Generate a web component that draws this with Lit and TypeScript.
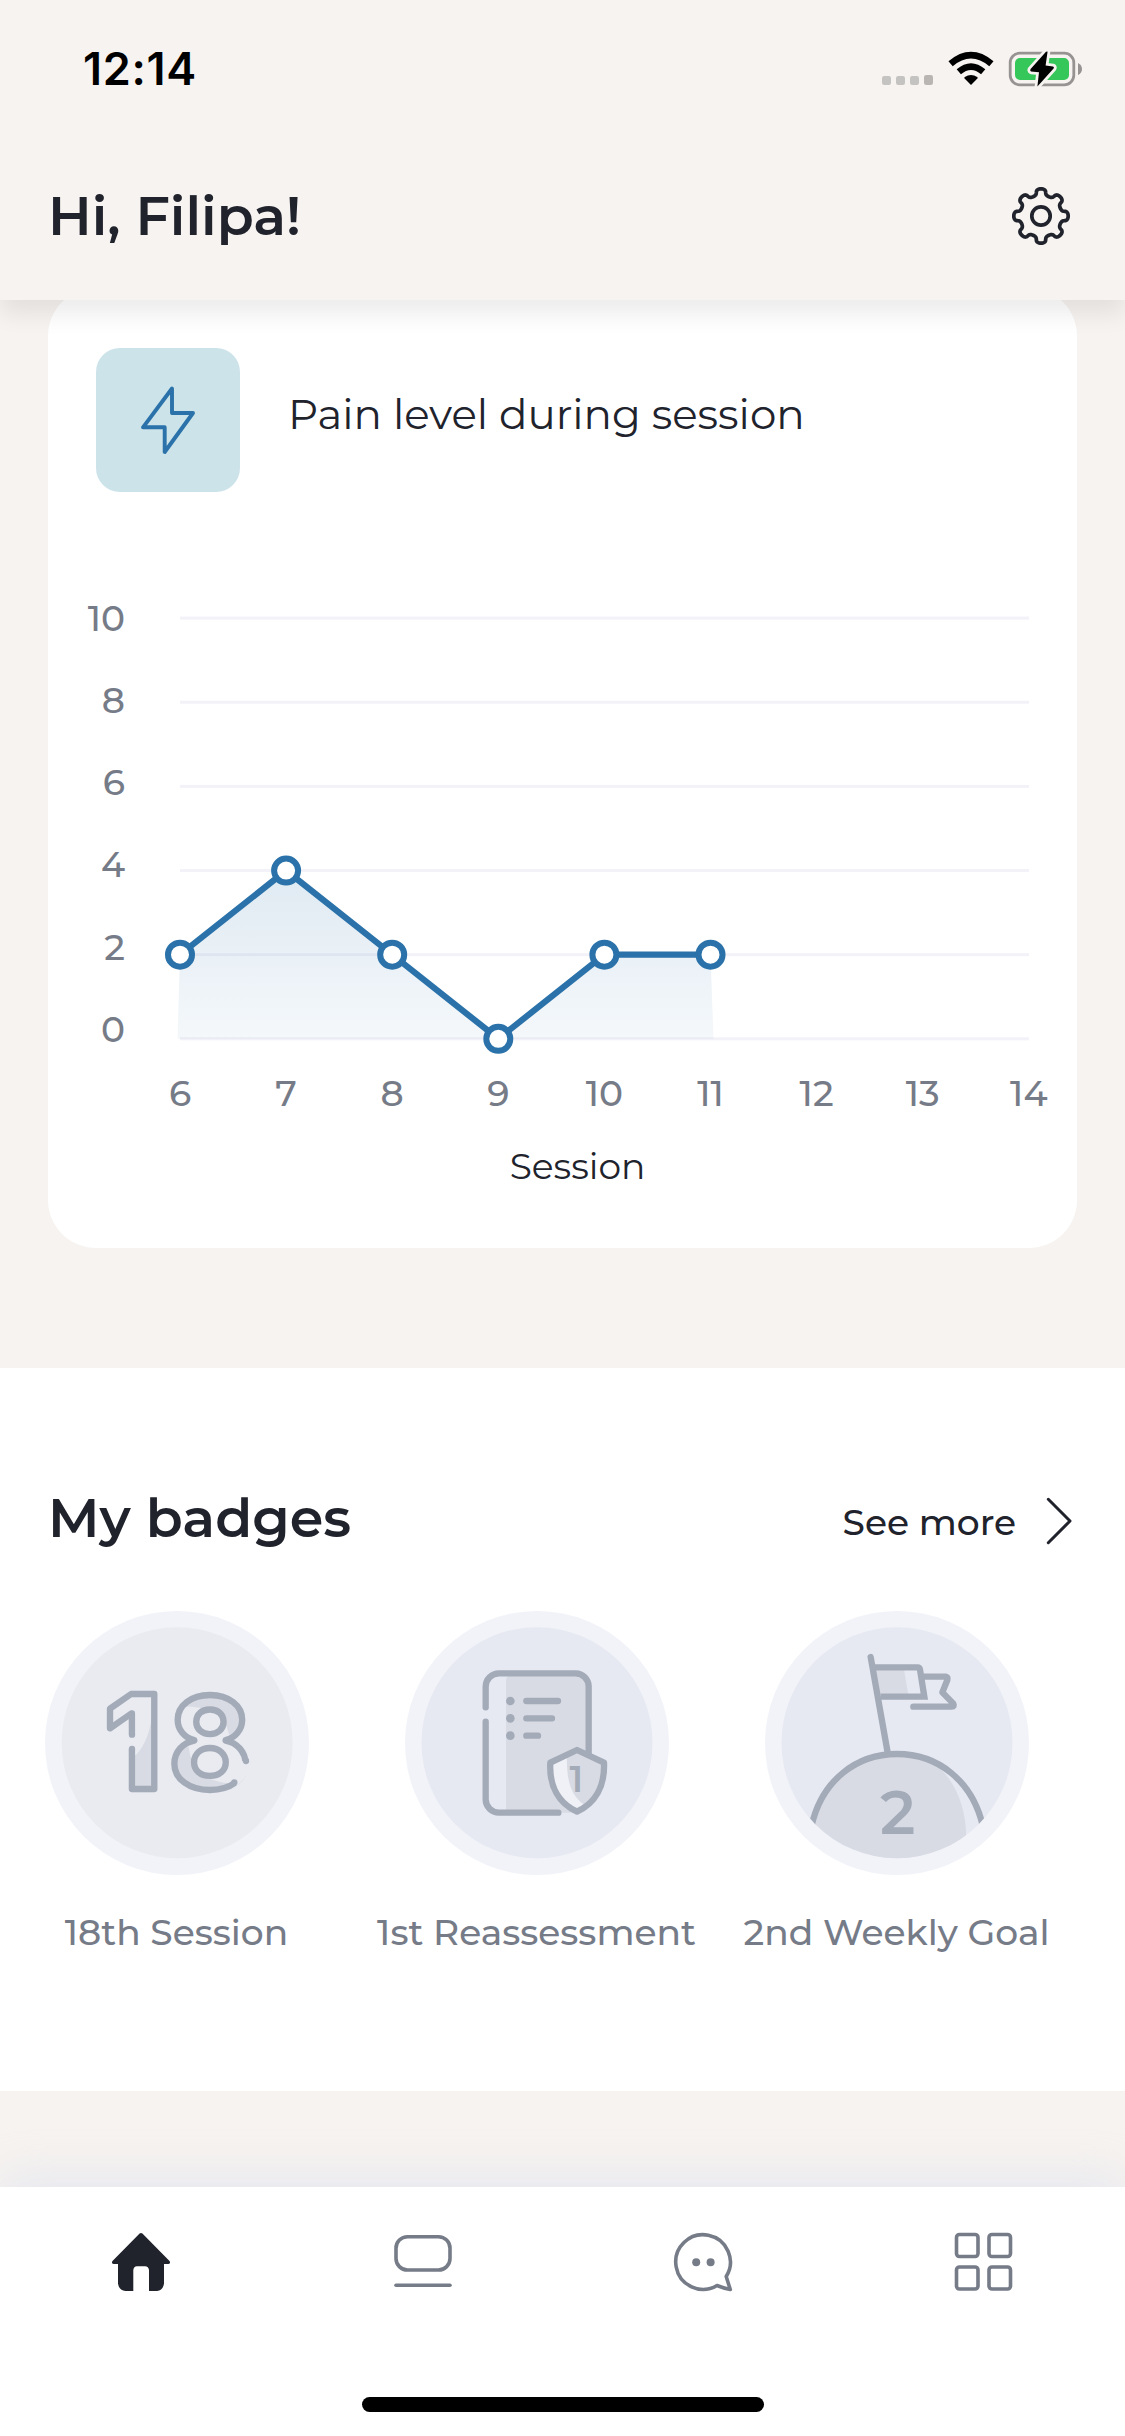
import { LitElement, html, svg, css } from "lit";
import { customElement } from "lit/decorators.js";

const INK = "#20222c";
const BLUE = "#2a72a9";

/** Outline of the eight-lobed settings wheel, centred on 30,30. */
function gearPath(): string {
  const pts: string[] = [];
  const steps = 320;
  for (let i = 0; i < steps; i++) {
    const t = (i / steps) * Math.PI * 2;
    const r = 24 + 3.2 * Math.cos(8 * t);
    const a = t + 0.045 * Math.sin(16 * t);
    pts.push(`${(30 + r * Math.cos(a)).toFixed(2)} ${(30 + r * Math.sin(a)).toFixed(2)}`);
  }
  return `M${pts.join("L")}Z`;
}

@customElement("status-bar")
class StatusBar extends LitElement {
  static styles = css`
    :host {
      display: flex;
      justify-content: space-between;
      height: 132px;
      box-sizing: border-box;
      padding: 42px 40px 0 83px;
    }
    .time {
      font-family: Inter, sans-serif;
      font-size: 45px;
      line-height: 54px;
      font-weight: 600;
      letter-spacing: 0.7px;
      color: #000;
    }
    .icons {
      width: 206px;
      height: 40px;
      margin-top: 8px;
    }
  `;
  render() {
    return html`
      <div class="time">12:14</div>
      <svg class="icons" viewBox="879 50 206 40">
        <g fill="#c5c3c1">
          <rect x="882" y="76" width="9" height="9" rx="2.2" />
          <rect x="896" y="76" width="9" height="9" rx="2.2" />
          <rect x="910" y="76" width="9" height="9" rx="2.2" />
          <rect x="924" y="75" width="9" height="10" rx="2.2" fill="#b8b5b3" />
        </g>
        <path d="M971 85 L964.6 78.6 Q963.8 77.8 964.8 77.1 Q971 73 977.2 77.1 Q978.2 77.8 977.4 78.6 Z" />
        <path d="M958.8 71.8 Q971 61.5 983.2 71.8" fill="none" stroke="#000" stroke-width="6.6" />
        <path d="M950.6 63.8 Q971 46.6 991.4 63.8" fill="none" stroke="#000" stroke-width="6.6" />
        <rect x="1010.2" y="53.2" width="63.6" height="31.6" rx="9.5" fill="none" stroke="#969392" stroke-width="2.8" />
        <path d="M1078 63 Q1082 65 1082 69 Q1082 73 1078 75 Z" fill="#969392" />
        <rect x="1015" y="58" width="54" height="22" rx="5" fill="#35c759" />
        <path
          d="M1047.6 51.4 L1045.6 65.6 L1053 66.4 Q1054.6 67 1053.6 68.6 L1037.4 86.6 L1039 72.2 L1031 71.4 Q1029.6 70.6 1030.6 69 L1046 51.8 Z"
          stroke="#f7f3f0"
          stroke-width="5.5"
          stroke-linejoin="round"
          paint-order="stroke"
          fill="#000"
        />
      </svg>
    `;
  }
}

@customElement("pain-chart")
class PainChart extends LitElement {
  static styles = css`
    :host {
      display: block;
    }
    .plot {
      display: block;
      width: 1029px;
      height: 648px;
    }
    .tick {
      font-size: 36px;
      font-weight: 500;
      fill: #767b88;
    }
  `;
  private values = [2, 4, 2, 0, 2, 2];
  private sessions = [6, 7, 8, 9, 10, 11, 12, 13, 14];
  private x(i: number) {
    return 180 + i * 106.1;
  }
  private y(v: number) {
    return 1038.8 - v * 42.07;
  }
  render() {
    const pts = this.values.map((v, i) => `${this.x(i)},${this.y(v)}`).join(" ");
    return html`
      <svg class="plot" viewBox="48 492 1029 648">
        <defs>
          <linearGradient id="area" gradientUnits="userSpaceOnUse" x1="0" y1="870" x2="0" y2="1039">
            <stop offset="0" stop-color=${BLUE} stop-opacity="0.15" />
            <stop offset="1" stop-color=${BLUE} stop-opacity="0.05" />
          </linearGradient>
        </defs>
        ${[0, 2, 4, 6, 8, 10].map(
          (v) => svg`
            <rect x="180" y=${this.y(v) - 1.5} width="849" height="3" fill="#f2f2f8" />
            <text class="tick" x="125" y=${1041.8 - v * 41.1} text-anchor="end">${v}</text>`
        )}
        <polygon points="177.5,1039 ${pts} 713.5,1039" fill="url(#area)" />
        <polyline points=${pts} fill="none" stroke=${BLUE} stroke-width="6.200" />
        ${this.values.map(
          (v, i) => svg`<circle cx=${this.x(i)} cy=${this.y(v)} r="12" fill="#fff" stroke=${BLUE} stroke-width="6" />`
        )}
        ${this.sessions.map(
          (s, i) => svg`<text class="tick" x=${this.x(i)} y="1106" text-anchor="middle">${s}</text>`
        )}
      </svg>
    `;
  }
}

@customElement("badge-item")
class BadgeItem extends LitElement {
  static properties = { kind: {}, label: {} };
  declare kind: string;
  declare label: string;
  static styles = css`
    :host {
      display: flex;
      flex-direction: column;
      align-items: center;
      width: 360px;
    }
    .art {
      width: 264px;
      height: 264px;
    }
    .label {
      margin: 32px 1px 0 0;
      font-size: 36px;
      line-height: 50px;
      font-weight: 500;
      color: #767b88;
      white-space: nowrap;
    }
    .line {
      fill: none;
      stroke: #a4abb8;
      stroke-width: 19;
      stroke-linecap: round;
      stroke-linejoin: round;
    }
    .sharp {
      stroke-linecap: butt;
      stroke-linejoin: miter;
    }
    .erase {
      fill: none;
      stroke: #e9ebf1;
      stroke-width: 25;
    }
    .solid {
      fill: #a4abb8;
    }
    .shade {
      fill: #d8dbe3;
    }
    .numeral {
      font-family: Inter, sans-serif;
      font-size: 382px;
      font-weight: 700;
    }
    .heavy {
      font-size: 390px;
      font-weight: 800;
    }
  `;

  private session() {
    return html`
      <svg class="art" viewBox="45 63 792 792">
        <defs>
          <clipPath id="num">
            <text class="numeral heavy" x="223" y="598">1</text>
            <text class="numeral" x="415.500" y="595.500">8</text>
          </clipPath>
        </defs>
        <circle cx="441" cy="459" r="396" fill="#f2f3f8" />
        <circle cx="441.500" cy="458" r="346.500" fill="#e9ebf1" />
        <g clip-path="url(#num)" class="shade">
          <path d="M366 370 Q360 450 318 495 H290 V610 H390 V370 Z" />
          <path d="M450 350 Q560 345 590 410 Q600 440 602 450 H660 V300 H450 Z" />
          <path d="M475 440 Q470 570 600 580 V620 H400 V440 Z" />
        </g>
        <text class="numeral heavy line" x="223" y="598">1</text>
        <text class="numeral line" x="415.500" y="595.500">8</text>
        <path class="erase" d="M306 434 V477" />
        <circle class="solid" cx="306" cy="434" r="9.500" />
        <circle class="solid" cx="306" cy="477" r="9.500" />
        <path class="erase" d="M648 513 Q649.500 551 613 577" />
        <circle class="solid" cx="648" cy="513" r="9.500" />
        <circle class="solid" cx="613" cy="577.500" r="9.500" />
      </svg>
    `;
  }

  private report() {
    return html`
      <svg class="art" viewBox="135 63 792 792">
        <circle cx="531" cy="459" r="396" fill="#f2f3f8" />
        <circle cx="531" cy="458" r="346.500" fill="#e6e9f2" />
        <path class="shade" d="M438 272 Q438 258 450 258 H650 Q684 262 684 292 V600 L652 668 H438 Z" />
        <path class="line" d="M377 352 V290 A40 40 0 0 1 417 250 H647 A39 39 0 0 1 686 289 V490" />
        <path class="line" d="M377 395 V628 A40 40 0 0 0 417 668 H595" />
        <circle class="solid" cx="451" cy="333" r="13" />
        <circle class="solid" cx="451" cy="385" r="13" />
        <circle class="solid" cx="451" cy="437" r="13" />
        <path class="line" d="M499 333 H594 M499 385 H576 M499 437 H534" />
        <path class="shade" d="M651 480 L732 518 C735 590 705 640 651 665 C597 640 567 590 571 518 Z" />
        <path d="M621 494 L571 518 C567 590 597 640 651 665 L672 644 C635 618 618 575 621 494 Z" fill="#f0f1f6" />
        <path class="line" d="M651 480 L732 518 C735 590 705 640 651 665 C597 640 567 590 571 518 Z" />
        <text class="solid" x="649" y="606" font-size="108" font-weight="600" text-anchor="middle">1</text>
      </svg>
    `;
  }

  private goal() {
    return html`
      <svg class="art" viewBox="135 423 792 792">
        <defs>
          <clipPath id="disc"><circle cx="531" cy="818" r="346.500" /></clipPath>
        </defs>
        <circle cx="531" cy="819" r="396" fill="#f2f3f8" />
        <circle cx="531" cy="818" r="346.500" fill="#e6e9f2" />
        <g clip-path="url(#disc)">
          <path
            class="shade"
            d="M278 1070 C310 930 410 852 531 852 C590 852 625 870 640 880 C700 920 742 1010 738 1110 V1200 H270 Z"
          />
          <path class="line" d="M274 1070 C305 930 410 852 531 852 C652 852 757 930 789 1070" />
        </g>
        <path class="shade" d="M462 598 H552 L565 676 H476 Z" />
        <path class="line" d="M452 561 L503 848" />
        <path class="line sharp" d="M464 592 H592 Q599 592 600 599 L613 680 H482" />
        <path class="line" d="M612 620 H678 Q684 622 682 630 L667 667 L700 701 Q704 710 695 710 H580" />
        <text class="solid" x="533" y="1092" font-size="182" font-weight="600" text-anchor="middle">2</text>
      </svg>
    `;
  }

  render() {
    const art = this.kind === "session" ? this.session() : this.kind === "report" ? this.report() : this.goal();
    return html`${art}
      <div class="label">${this.label}</div>`;
  }
}

@customElement("tab-bar")
class TabBar extends LitElement {
  static styles = css`
    :host {
      display: block;
      position: relative;
      height: 249px;
      background: #fff;
      box-shadow: 0 -8px 46px rgba(207, 216, 240, 0.45);
    }
    .tabs {
      display: grid;
      grid-template-columns: repeat(4, 1fr);
      place-items: center;
      height: 150px;
    }
    .tab {
      width: 60px;
      height: 60px;
      fill: none;
      stroke: #767b88;
      stroke-width: 3.6;
      stroke-linecap: round;
      stroke-linejoin: round;
    }
    .active {
      fill: #20222c;
      stroke: none;
    }
    .eye {
      fill: #767b88;
      stroke: none;
    }
    .grip {
      width: 402px;
      height: 15px;
      margin: 60px auto 0;
      border-radius: 8px;
      background: #000;
    }
  `;
  render() {
    return html`
      <div class="tabs">
        <svg class="tab active" viewBox="0 0 60 60">
          <path
            d="M28.600 1.500 Q30 0.300 31.400 1.500 L58.500 29 Q60 31.500 57.500 32 H53 V51.500 Q52 58.500 46 59 H38 V38 Q37.500 34.500 34 34.300 H26 Q22.700 34.500 22.300 38 V59 H14.500 Q8 58.500 7 51.500 V32 H2.500 Q0 31.500 1.500 29 Z"
          />
        </svg>
        <svg class="tab" viewBox="0 0 60 60">
          <rect x="4" y="4.700" width="54" height="33.300" rx="11.500" />
          <path d="M4 53.300 H58" />
        </svg>
        <svg class="tab" viewBox="0 0 60 60">
          <path d="M44 53.500 A27.300 27.300 0 1 1 53.200 44.500 Q55.500 52 57.300 57.500 Q50 56 44 53.500 Z" />
          <circle class="eye" cx="23.200" cy="30.300" r="4" />
          <circle class="eye" cx="37.600" cy="30.300" r="4" />
        </svg>
        <svg class="tab" viewBox="0 0 60 60">
          <rect x="2.500" y="2.500" width="21.500" height="22" rx="3" />
          <rect x="35" y="2.500" width="21.500" height="22" rx="3" />
          <rect x="2.500" y="35" width="21.500" height="22" rx="3" />
          <rect x="35" y="35" width="21.500" height="22" rx="3" />
        </svg>
      </div>
      <div class="grip"></div>
    `;
  }
}

@customElement("app-root")
class AppRoot extends LitElement {
  static styles = css`
    :host {
      display: block;
      width: 1125px;
      height: 2436px;
      overflow: hidden;
      background: #f7f3f0;
      color: #20222c;
      font-family: Montserrat, Inter, "Open Sans", sans-serif;
    }
    .top {
      position: relative;
      z-index: 1;
      height: 300px;
      background: #f7f3f0;
      box-shadow: 0 14px 22px rgba(0, 0, 0, 0.08);
    }
    .greeting {
      display: flex;
      justify-content: space-between;
      align-items: center;
      height: 168px;
      padding: 0 54px 0 48px;
    }
    .heading {
      margin: 0;
      font-size: 54px;
      line-height: 80px;
      font-weight: 600;
    }
    .gear {
      width: 60px;
      height: 60px;
    }
    .card {
      margin: -12px 48px 0;
      height: 960px;
      border-radius: 48px;
      background: #fff;
    }
    .card-head {
      display: flex;
      align-items: center;
      gap: 48px;
      padding: 60px 48px 0;
    }
    .tile {
      display: flex;
      width: 144px;
      height: 144px;
      border-radius: 24px;
      background: #cbe3e9;
    }
    .bolt {
      width: 144px;
      height: 144px;
    }
    .card-title {
      padding-bottom: 12px;
      font-size: 42px;
      line-height: 56px;
    }
    .axis {
      padding: 0 0 0 30px;
      text-align: center;
      font-size: 36px;
      line-height: 52px;
    }
    .badges {
      height: 723px;
      margin-top: 120px;
      margin-bottom: 96px;
      background: #fff;
    }
    .badges-head {
      display: flex;
      justify-content: space-between;
      align-items: center;
      padding: 110px 48px 53px;
    }
    .more {
      display: flex;
      align-items: center;
      gap: 27px;
      font-size: 36px;
      line-height: 50px;
      font-weight: 500;
      padding-top: 8px;
    }
    .chevron {
      width: 34px;
      height: 50px;
      margin-bottom: 2px;
    }
    .row {
      display: flex;
      margin-left: -3px;
    }
  `;
  render() {
    return html`
      <div class="top">
        <status-bar></status-bar>
        <div class="greeting">
          <h1 class="heading">Hi, Filipa!</h1>
          <svg class="gear" viewBox="0 0 60 60" fill="none" stroke=${INK} stroke-width="3.700" stroke-linejoin="round">
            <path d=${gearPath()} />
            <circle cx="30" cy="30" r="9.200" />
          </svg>
        </div>
      </div>
      <section class="card">
        <div class="card-head">
          <div class="tile">
            <svg class="bolt" viewBox="96 348 144 144" fill="none" stroke=${BLUE} stroke-width="3.900" stroke-linejoin="round">
              <path d="M172 388.500 V413 H193 L164.700 452 V427.300 H143 Z" />
            </svg>
          </div>
          <div class="card-title">Pain level during session</div>
        </div>
        <pain-chart></pain-chart>
        <div class="axis">Session</div>
      </section>
      <section class="badges">
        <div class="badges-head">
          <h2 class="heading">My badges</h2>
          <div class="more">
            <span>See more</span>
            <svg class="chevron" viewBox="1043 1496 34 50" fill="none" stroke=${INK} stroke-width="3" stroke-linecap="round" stroke-linejoin="round">
              <path d="M1048.300 1499.300 L1070 1521 L1048.300 1542.700" />
            </svg>
          </div>
        </div>
        <div class="row">
          <badge-item kind="session" label="18th Session"></badge-item>
          <badge-item kind="report" label="1st Reassessment"></badge-item>
          <badge-item kind="goal" label="2nd Weekly Goal"></badge-item>
        </div>
      </section>
      <tab-bar></tab-bar>
    `;
  }
}
